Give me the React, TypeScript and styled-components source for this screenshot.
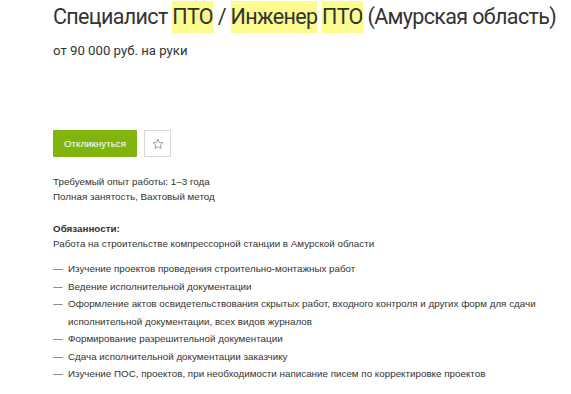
import React from 'react'
import styled, { createGlobalStyle } from 'styled-components'

const GlobalStyle = createGlobalStyle`
  body {
    margin: 0;
    background: #fff;
  }
`

const Page = styled.div`
  width: 571px;
  height: 394px;
  overflow: hidden;
  padding: 1px 0 0 53px;
  box-sizing: border-box;
  color: #333;
  font-family: 'Liberation Sans', Arial, sans-serif;
`

const Title = styled.h1`
  margin: 0;
  font-family: Roboto, sans-serif;
  font-weight: 400;
  font-size: 21.5px;
  letter-spacing: -0.65px;
  line-height: 32px;
  color: #333;
  white-space: nowrap;
`

const Mark = styled.span`
  background: #fbfb8e;
  padding: 3px 0 4px;
`

const Salary = styled.div`
  margin-top: 9px;
  font-family: Roboto, sans-serif;
  font-size: 13.2px;
  line-height: 18px;
`

const Actions = styled.div`
  display: flex;
  gap: 7px;
  margin-top: 70px;
`

const RespondButton = styled.button`
  height: 27px;
  width: 84px;
  padding: 0;
  border: none;
  border-radius: 1px;
  background: #82b40e;
  color: #fff;
  font-family: 'Liberation Sans', Arial, sans-serif;
  font-size: 9.8px;
`

const StarButton = styled.button`
  width: 27px;
  height: 27px;
  padding: 0;
  display: flex;
  align-items: center;
  justify-content: center;
  border: 1px solid #d8d8d8;
  background: #fff;
`

const Info = styled.div<{ gap: number }>`
  margin-top: ${(p) => p.gap}px;
  font-size: 9.8px;
  letter-spacing: 0.01px;
  line-height: 15px;
`

const Heading = styled.div`
  font-weight: 700;
`

const List = styled.ul`
  list-style: none;
  margin: 9px 0 0;
  padding: 0;
  font-size: 9.8px;
  letter-spacing: 0.01px;
  line-height: 17.5px;
`

const Item = styled.li`
  position: relative;
  padding-left: 15px;
  width: 470px;

  &::before {
    content: '—';
    position: absolute;
    left: 0;
  }
`

const duties = [
  'Изучение проектов проведения строительно-монтажных работ',
  'Ведение исполнительной документации',
  'Оформление актов освидетельствования скрытых работ, входного контроля и других форм для сдачи исполнительной документации, всех видов журналов',
  'Формирование разрешительной документации',
  'Сдача исполнительной документации заказчику',
  'Изучение ПОС, проектов, при необходимости написание писем по корректировке проектов',
]

const App = () => {
  return (
    <Page>
      <GlobalStyle />
      <Title>
        Специалист <Mark>ПТО</Mark> / <Mark>Инженер</Mark> <Mark>ПТО</Mark> (Амурская область)
      </Title>
      <Salary>от 90 000 руб. на руки</Salary>

      <Actions>
        <RespondButton>Откликнуться</RespondButton>
        <StarButton>
          <svg width="12" height="12" viewBox="0 0 24 24" fill="none" stroke="#888" strokeWidth="1.6" strokeLinejoin="round">
            <polygon points="12,2.5 14.9,8.9 21.8,9.6 16.6,14.2 18.1,21 12,17.5 5.9,21 7.4,14.2 2.2,9.6 9.1,8.9" />
          </svg>
        </StarButton>
      </Actions>

      <Info gap={17}>
        Требуемый опыт работы: 1–3 года
        <br />
        Полная занятость, Вахтовый метод
      </Info>

      <Info gap={17}>
        <Heading>Обязанности:</Heading>
        Работа на строительстве компрессорной станции в Амурской области
      </Info>

      <List>
        {duties.map((d, i) => (
          <Item key={i}>{d}</Item>
        ))}
      </List>
    </Page>
  )
}

export default App
